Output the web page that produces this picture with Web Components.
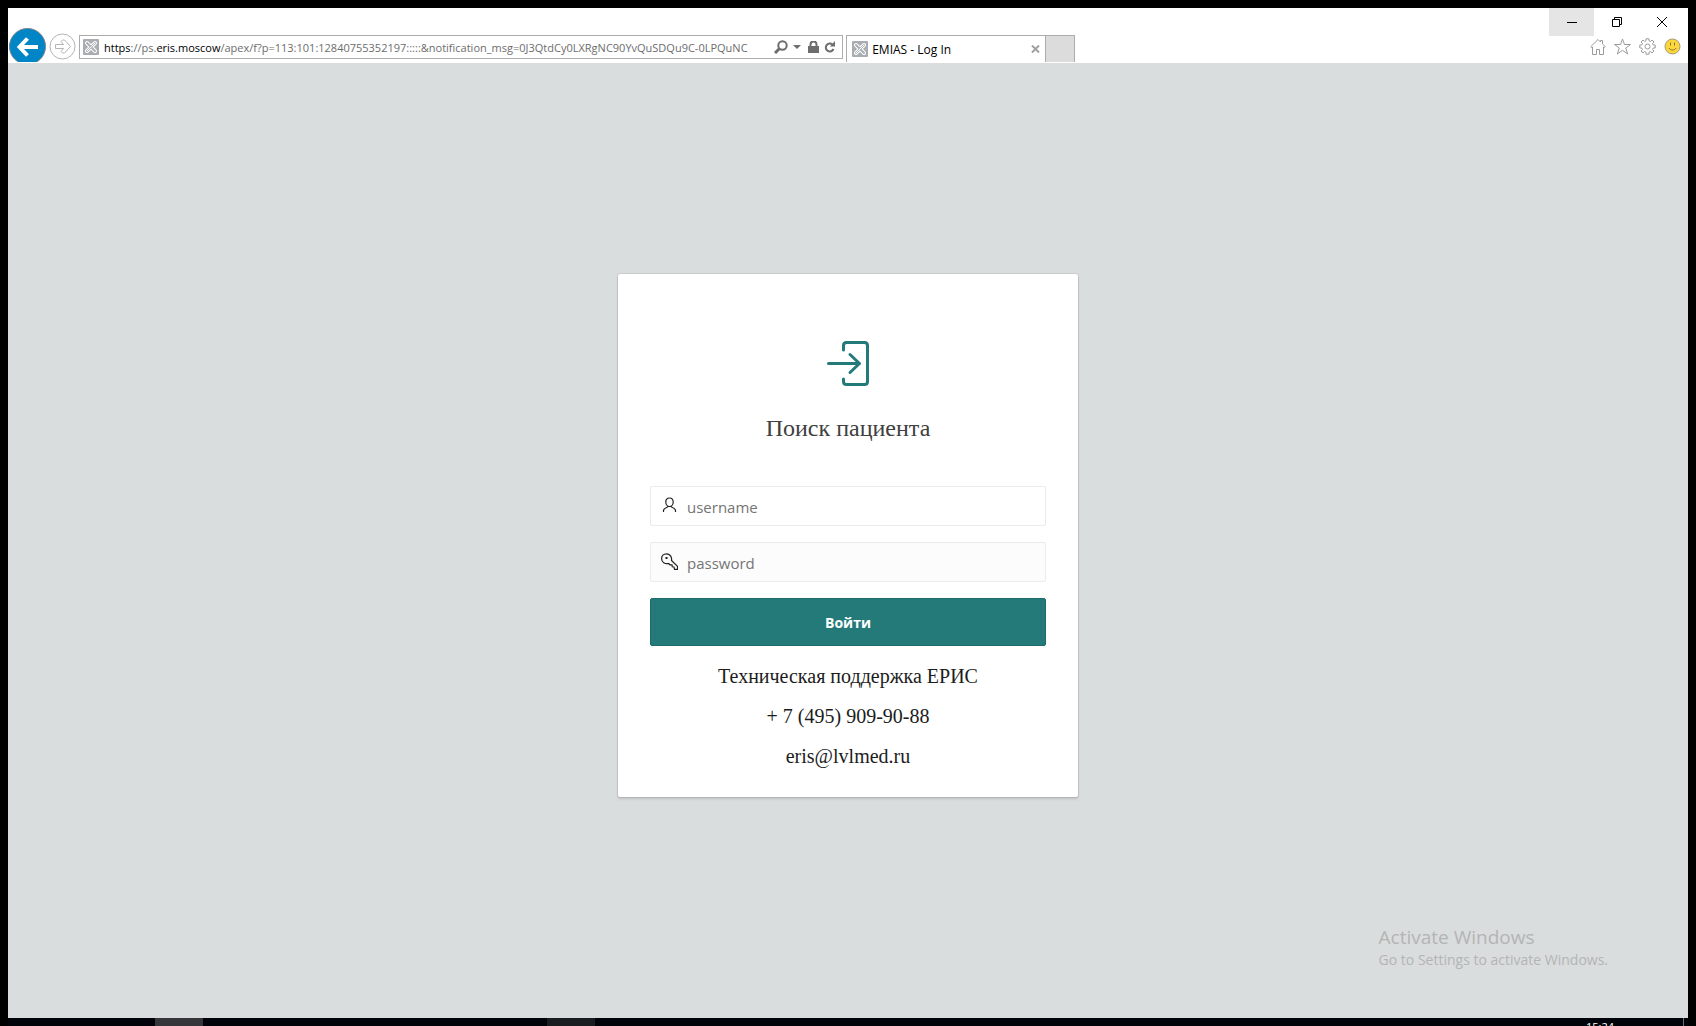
<!DOCTYPE html>
<html lang="ru">
<head>
<meta charset="utf-8">
<title>EMIAS - Log In</title>
<style>
html, body { height: 100%; margin: 0; }
body { background: #000; font-family: "Open Sans", "Noto Sans", sans-serif; }
</style>
</head>
<body>
<remote-desktop>
  <browser-window>
    <browser-toolbar slot="toolbar"></browser-toolbar>
    <login-card heading="Поиск пациента">
      <p>Техническая поддержка ЕРИС</p>
      <p>+ 7 (495) 909-90-88</p>
      <p>eris@lvlmed.ru</p>
    </login-card>
  </browser-window>
  <activation-note slot="overlay"></activation-note>
  <task-bar slot="taskbar"></task-bar>
</remote-desktop>

<script>
function define(name, markup, setup) {
  customElements.define(name, class extends HTMLElement {
    constructor() {
      super();
      this.attachShadow({ mode: 'open' }).innerHTML = markup;
    }
    connectedCallback() { if (setup) setup(this); }
  });
}

define('remote-desktop', `
<style>
:host { display: flex; flex-direction: column; box-sizing: border-box; height: 100vh; padding: 8px 8px 0; position: relative; overflow: hidden; }
</style>
<slot></slot><slot name="taskbar"></slot><slot name="overlay"></slot>`);

define('browser-window', `
<style>
:host { display: flex; flex-direction: column; flex: 1; min-height: 0; background: #d9dddd; }
main { flex: 1; min-height: 0; display: flex; align-items: center; justify-content: center; padding-bottom: 10px; }
</style>
<slot name="toolbar"></slot>
<main><slot></slot></main>`);

define('site-icon', `
<style>
:host { display: block; width: 16px; height: 16px; flex: none; }
svg { display: block; }
</style>
<svg width="16" height="16" viewBox="0 0 16 16" fill="none" stroke="#fff" stroke-linecap="round">
  <rect width="16" height="16" rx="1" fill="#a9adb2" stroke="none"/>
  <path d="M4 4l8 8M12 4l-8 8" stroke-width="4"/>
  <path d="M4 4l8 8M12 4l-8 8" stroke="#a9adb2" stroke-width="2"/>
  <path d="M4 12l8-8" stroke-width="1"/>
</svg>`);

define('browser-toolbar', `
<style>
:host { display: flex; justify-content: space-between; height: 55px; flex: none; background: #fff; font-size: 12px; color: #000; }
button { border: 0; padding: 0; margin: 0; background: none; font: inherit; display: block; flex: none; }
svg { display: block; }
nav { display: flex; align-items: flex-end; box-sizing: border-box; padding-bottom: 1px; width: calc(64% - 8px); min-width: 0; }
.back { width: 37px; height: 34px; overflow: hidden; margin-left: 1px; }
.forward { height: 27px; width: 27px; margin: 0 3px 2px; }
.address { display: flex; align-items: center; box-sizing: border-box; height: 24px; flex: 1; min-width: 0; border: 1px solid #acacac; padding: 0 6px 0 3px; margin-bottom: 3px; }
.url { flex: 1; min-width: 0; overflow: hidden; white-space: nowrap; color: #6d6d6d; margin: 0 5px 0 5px; padding-top: 1px; font-size: 11px; line-height: 20px; }
.url b { font-weight: 400; color: #000; }
.tools { display: flex; align-items: center; gap: 5px; }
.lock { margin-left: 2px; }
.tab { display: flex; align-items: center; box-sizing: border-box; width: 200px; height: 27px; border: 1px solid #acacac; border-bottom: 0; margin-left: 3px; padding: 0 5px; flex: none; }
.tab span { flex: 1; margin-left: 4px; padding-top: 2px; line-height: 20px; }
.new { width: 29px; height: 27px; box-sizing: border-box; background: #dcdcdc; border: 1px solid #acacac; border-width: 1px 1px 0 0; }
aside { display: flex; flex-direction: column; align-items: flex-end; }
.window { display: flex; height: 28px; }
.window button { width: 45px; height: 28px; display: grid; place-items: center; }
.window .min { background: #e5e5e5; }
.window button:last-child { padding-right: 4px; width: 49px; }
.icons { display: flex; gap: 8px; padding: 2px 7px 0 0; }
</style>
<nav>
  <button class="back" aria-label="Back"><svg width="37" height="37" viewBox="0 0 37 37"><circle cx="18.5" cy="18.5" r="18" fill="#0085c7" stroke="#7d8488"/><path d="M29 19H11M18.500 10.500L10.500 19l8 8.500" fill="none" stroke="#fff" stroke-width="4"/></svg></button>
  <button class="forward" aria-label="Forward"><svg width="27" height="27" viewBox="0 0 27 27" fill="none" stroke="#b4b4b4"><circle cx="13.500" cy="13.500" r="12.500"/><path d="M6.500 11.500h8L12 8.500l1.500-1.500h2l6 6.500-6 6.500h-2L12 18.500l2.500-3h-8z"/></svg></button>
  <div class="address">
    <site-icon></site-icon>
    <div class="url"><b>https</b>://ps.<b>eris.moscow</b>/apex/f?p=113:101:12840755352197:::::&amp;notification_msg=0J3QtdCy0LXRgNC90YvQuSDQu9C-0LPQuNC</div>
    <div class="tools">
      <button aria-label="Search"><svg width="14" height="14" viewBox="0 0 14 14" fill="none" stroke="#6d6d6d"><circle cx="8.500" cy="5.500" r="4.200" stroke-width="2"/><path d="M5.500 8.500L1 13" stroke-width="3"/></svg></button>
      <button aria-label="Address list"><svg width="8" height="5" viewBox="0 0 8 5"><path d="M0 0h8L4 4z" fill="#6d6d6d"/></svg></button>
      <svg class="lock" width="11" height="12" viewBox="0 0 11 12"><path d="M2.500 6V3.500a3 3 0 016 0V6" fill="none" stroke="#6d6d6d" stroke-width="2"/><path d="M0 5h11v7H0z" fill="#6d6d6d"/></svg>
      <button aria-label="Refresh"><svg width="12" height="13" viewBox="0 0 12 13"><path d="M8.500 3.500A4 4 0 109.500 8" fill="none" stroke="#6d6d6d" stroke-width="2"/><path d="M6 5.500L11 5.500V0z" fill="#6d6d6d"/></svg></button>
    </div>
  </div>
  <div class="tab"><site-icon></site-icon><span>EMIAS - Log In</span><button aria-label="Close tab"><svg width="9" height="8" viewBox="0 0 9 8"><path d="M1 .5l7 7M8 .5l-7 7" stroke="#a0a0a0" stroke-width="2"/></svg></button></div>
  <button class="new" aria-label="New tab"></button>
</nav>
<aside>
  <div class="window">
    <button class="min" aria-label="Minimize"><svg width="10" height="10"><path d="M0 5.500h10" stroke="#000"/></svg></button>
    <button aria-label="Restore"><svg width="10" height="10" fill="none" stroke="#000"><path d="M.5 2.500h7v7h-7zM2.500 2.500v-2h7v7h-2"/></svg></button>
    <button aria-label="Close"><svg width="10" height="10"><path d="M0 0l10 10M10 0L0 10" stroke="#000"/></svg></button>
  </div>
  <div class="icons">
    <button aria-label="Home"><svg width="16" height="17" viewBox="0 0 16 17" fill="none" stroke="#9b9b9b"><path d="M8 1.500L.7 8.700l1 1L2.500 9v7.500h4v-5h3v5h4V9l.8.700 1-1-2.800-2.700V2.500h-2v1.500z"/></svg></button>
    <button aria-label="Favorites"><svg width="17" height="17" viewBox="0 0 17 17" fill="none" stroke="#9b9b9b"><path d="M8.500 1l2 5.500h6L11.700 10l2 6-5.200-3.700L3.300 16l2-6L.5 6.500h6z"/></svg></button>
    <button aria-label="Tools"><svg width="17" height="17" viewBox="0 0 17 17" fill="none" stroke="#9b9b9b"><path d="M7 .8h3v2l1.500.7L13 2l2 2-1.500 1.500.7 1.500h2v3h-2l-.7 1.500L15 13l-2 2-1.500-1.500-1.500.7v2H7v-2l-1.500-.7L4 15l-2-2 1.500-1.500L2.800 10h-2V7h2l.7-1.500L2 4l2-2 1.500 1.500L7 2.800z"/><circle cx="8.500" cy="8.500" r="2.500"/></svg></button>
    <button aria-label="Feedback"><svg width="17" height="17" viewBox="0 0 17 17"><circle cx="8.500" cy="8.500" r="7.500" fill="#fbd63d" stroke="#a39a79"/><path d="M6.500 4.500v3M10.500 4.500v3M5 10c1 2.700 6 2.700 7 0" fill="none" stroke="#8a7430"/></svg></button>
  </div>
</aside>`);

define('login-card', `
<style>
:host { display: block; box-sizing: border-box; width: 460px; padding: 64px 32px 31px; background: #fff; border-radius: 2px; box-shadow: 0 0 0 1px rgba(0,0,0,.07), 0 2px 3px rgba(0,0,0,.13); font-family: "Liberation Serif", serif; color: #1c1c1c; text-align: center; }
.logo { display: block; margin: 0 auto; }
h1 { margin: 20px 0 40px; font-size: 24px; line-height: 36px; font-weight: 400; color: #404040; }
form { display: flex; flex-direction: column; gap: 16px; }
button { height: 48px; border: 1px solid #1f6b69; border-radius: 2px; background: #247a78; color: #fff; font: 700 14px "Open Sans", "Noto Sans", sans-serif; }
::slotted(p) { margin: 20px 0 0; font-size: 20px; line-height: 20px; }
</style>
<svg class="logo" width="48" height="52" viewBox="0 0 48 52" fill="none" stroke="#247a78" stroke-width="3" stroke-linecap="round" stroke-linejoin="round"><path d="M19.500 12V7.500q0-3 3-3h18q3 0 3 3v36q0 3-3 3h-18q-3 0-3-3V41M4.500 25.500h31M26 16.500l9.500 9-9.500 9"/></svg>
<h1></h1>
<form onsubmit="return false">
  <login-field kind="user" label="username"></login-field>
  <login-field kind="key" label="password"></login-field>
  <button>Войти</button>
</form>
<slot></slot>`, el => {
  el.shadowRoot.querySelector('h1').textContent = el.getAttribute('heading');
});

define('login-field', `
<style>
:host { display: flex; align-items: center; box-sizing: border-box; height: 40px; border: 1px solid #ebebeb; border-radius: 2px; background: #fff; padding-left: 10px; }
:host([kind="key"]) { background: #fcfcfc; }
label { display: block; width: 17px; height: 18px; }
svg { display: block; }
input { flex: 1; min-width: 0; height: 38px; box-sizing: border-box; border: 0; outline: 0; background: none; padding: 2px 8px 0 9px; font: 15px "Open Sans", "Noto Sans", sans-serif; color: #404040; }
input::placeholder { color: #757575; opacity: 1; }
</style>
<label for="field"></label><input id="field">`, el => {
  const icons = {
    user: '<path d="M8.500 1C6 1 4.800 2.700 4.800 5c0 2.500 1.600 4.500 3.700 4.500s3.700-2 3.700-4.500c0-2.300-1.200-4-3.700-4zM2.500 15v-1.500c0-1.500 1.500-2.500 4-3.500l.5-1M14.500 15v-1.500c0-1.500-1.500-2.500-4-3.500L10 9"/>',
    key: '<path d="M10.500 7.500c.6-3.500-1.500-6.700-5-6.700C2.500.8.600 3 .6 5.700c0 3.500 3.500 5.700 6.900 4.800l1.500 1.300h2l.3 2 1.700.2.500 2.300h3v-3z"/><path d="M4.500 5h2" stroke-width="2"/>'
  };
  const label = el.getAttribute('label');
  const tag = el.shadowRoot.querySelector('label');
  tag.setAttribute('aria-label', label);
  tag.innerHTML = '<svg width="17" height="17" viewBox="0 0 17 17" fill="none" stroke="#222" stroke-width="1.200">' + icons[el.getAttribute('kind')] + '</svg>';
  const input = el.shadowRoot.querySelector('input');
  input.placeholder = label;
  input.type = label === 'password' ? 'password' : 'text';
});

define('activation-note', `
<style>
:host { display: block; position: absolute; right: 88px; bottom: 56px; color: #b3b5b5; }
div { font-size: 19px; line-height: 26px; }
small { display: block; font-size: 14px; line-height: 20px; }
</style>
<div>Activate Windows</div><small>Go to Settings to activate Windows.</small>`);

define('task-bar', `
<style>
:host { display: flex; height: 8px; flex: none; overflow: hidden; background: #00040a; color: #fff; font-size: 11px; }
button { border: 0; padding: 0; width: 48px; height: 8px; background: #35363a; margin-left: 147px; }
button + button { background: #1a1d20; margin-left: 344px; }
time { margin-left: auto; line-height: 18px; padding-right: 69px; }
i { width: 1px; margin-right: 4px; background: #6b6e72; }
</style>
<button aria-label="Pinned window"></button><button aria-label="Open window"></button>
<time>15:24</time><i></i>`);
</script>
</body>
</html>
